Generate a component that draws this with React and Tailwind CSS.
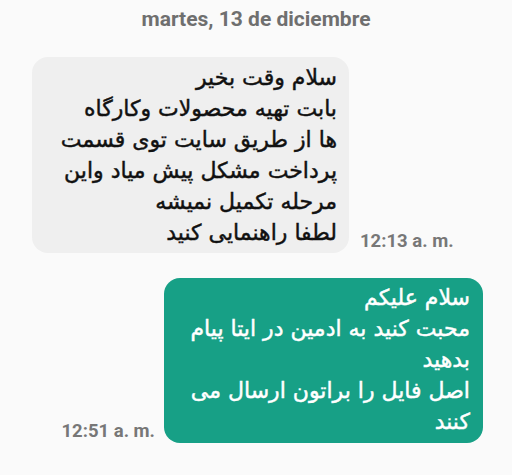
export default function App() {
  const received = [
    "سلام وقت بخیر",
    "بابت تهیه محصولات وکارگاه",
    "ها از طریق سایت توی قسمت",
    "پرداخت مشکل پیش میاد واین",
    "مرحله تکمیل نمیشه",
    "لطفا راهنمایی کنید",
  ];
  const sent = [
    "سلام علیکم",
    "محبت کنید به ادمین در ایتا پیام",
    "بدهید",
    "اصل فایل را براتون ارسال می",
    "کنند",
  ];

  return (
    <div className="w-[512px] h-[475px] bg-[#fafafa] flex flex-col font-['Roboto',sans-serif] overflow-hidden">
      <div className="pt-[6px] text-center text-[21px] leading-[26px] font-bold text-[#6f6f6f]">
        martes, 13 de diciembre
      </div>

      <div className="mt-[25px] pl-[32px] flex items-end gap-[11px]">
        <div
          dir="rtl"
          className="w-[317px] h-[196px] bg-[#efefef] rounded-[16px] pr-[12px] pt-[5px] text-[22px] leading-[31px] text-[#111] [-webkit-text-stroke:0.45px_#111] font-['DejaVu_Sans','Noto_Sans',sans-serif]"
        >
          {received.map((line, i) => (
            <div key={i} className="whitespace-nowrap">{line}</div>
          ))}
        </div>
        <div className="pb-[1px] text-[18.5px] leading-[22px] font-bold text-[#777]">12:13 a. m.</div>
      </div>

      <div className="mt-[25px] pr-[29px] flex items-end justify-end gap-[9px]">
        <div className="pb-[1px] text-[18.5px] leading-[22px] font-bold text-[#777]">12:51 a. m.</div>
        <div
          dir="rtl"
          className="w-[319px] h-[165px] bg-[#17a086] rounded-[16px] pr-[13px] pt-[4px] text-[22px] leading-[31px] text-white [-webkit-text-stroke:0.45px_#fff] font-['DejaVu_Sans','Noto_Sans',sans-serif]"
        >
          {sent.map((line, i) => (
            <div key={i} className="whitespace-nowrap">{line}</div>
          ))}
        </div>
      </div>
    </div>
  );
}
